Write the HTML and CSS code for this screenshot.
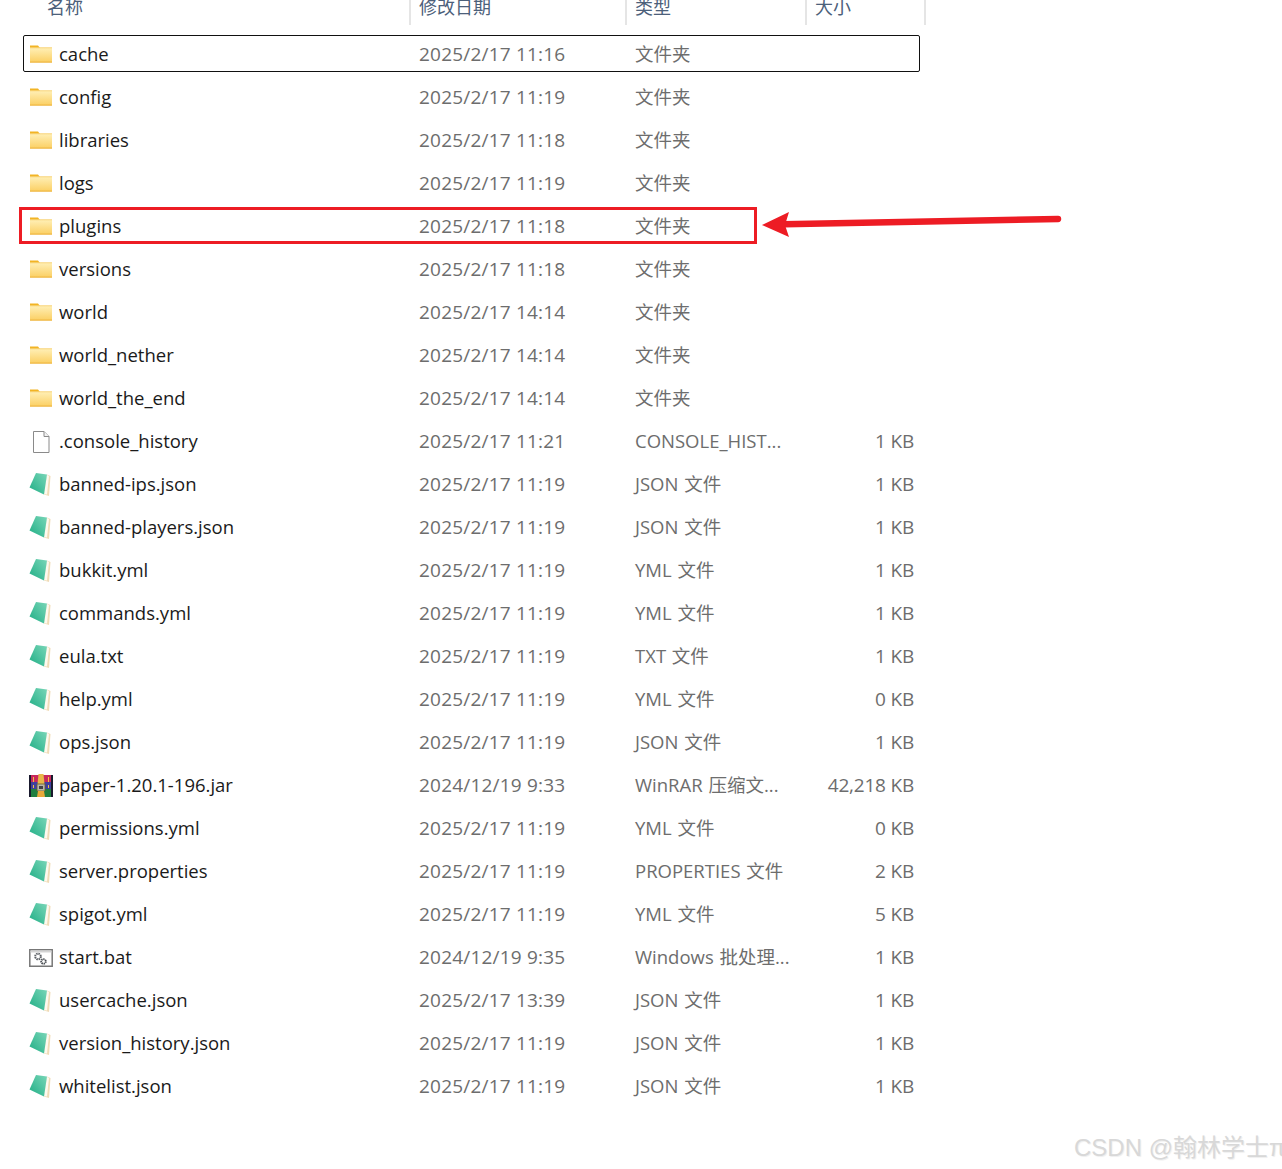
FILE: index.html
```html
<!DOCTYPE html>
<html lang="zh-CN">
<head>
<meta charset="utf-8">
<title>服务器文件夹</title>
<link rel="stylesheet" href="styles.css">
</head>
<body>
<svg class="defs" width="0" height="0" aria-hidden="true">
  <defs>
    <linearGradient id="fg" x1="0" y1="0" x2="0" y2="1"><stop offset="0" stop-color="#fff0b8"/><stop offset="1" stop-color="#fbcf62"/></linearGradient>
    <linearGradient id="ng" x1="0" y1="1" x2="1" y2="0"><stop offset="0" stop-color="#1fae85"/><stop offset="1" stop-color="#7ad6b8"/></linearGradient>
    <symbol id="folder" viewBox="0 0 24 20">
      <path d="M1 .5h8l2 2.500H1z" fill="#f2b424"/>
      <path d="M1 2.500h22v15H1z" fill="url(#fg)"/>
      <path d="M1 16.700h22v.8H1z" fill="#e8a92a"/>
      <path d="M1 2.500h22v.7H1z" fill="#f5c65a"/>
    </symbol>
    <symbol id="blank" viewBox="0 0 24 24">
      <path d="M4.500 1.500h10.500l5 5v16h-15.500z" fill="#fff" stroke="#8a8a8a"/>
      <path d="M15 1.500v5h5" fill="#f2f2f2" stroke="#8a8a8a"/>
    </symbol>
    <symbol id="note" viewBox="0 0 24 24">
      <path d="M18 1.500l3.500 1.500-1.500 20-5-1.500z" fill="#f0dcb8"/>
      <path d="M18 2l2 1-2 18.500-3-.5z" fill="#fdfaf0"/>
      <path d="M7 0l11 1.500-3 20L.5 14.500z" fill="url(#ng)"/>
    </symbol>
    <symbol id="rar" viewBox="0 0 24 24">
      <path d="M0 1h24v7H0z" fill="#c8285c"/>
      <path d="M0 8h24v7H0z" fill="#3f3f9f"/>
      <path d="M0 15h24v8H0z" fill="#1f7f3f"/>
      <path d="M0 1h2v22H0zM22 1h2v22h-2z" fill="#1a1a2e"/>
      <path d="M9.500 0h5l1 10h-7z" fill="#e8b84a"/>
      <path d="M8 10h8v7H8z" fill="#b9b6a8" stroke="#6b5a2a" stroke-width=".8"/>
      <path d="M10 12h4v3h-4z" fill="#444"/>
      <path d="M9 17h6l1 6H8z" fill="#e8a93a"/>
      <path d="M4 3h1v5H4zM4 11h1v3H4zM19 3h1v5h-1zM19 11h1v3h-1z" fill="#f1c040"/>
    </symbol>
    <symbol id="bat" viewBox="0 0 24 24">
      <path d="M.8 3.800h22.400v16.400H.8z" fill="#fff" stroke="#777" stroke-width="1.500"/>
      <path d="M1.500 4.500h21v2h-21z" fill="#d4d4d4"/>
      <circle cx="9" cy="10.500" r="2.800" fill="none" stroke="#5f6368" stroke-width="2" stroke-dasharray="1.500 .7"/>
      <circle cx="14.500" cy="15.500" r="2.300" fill="none" stroke="#45494e" stroke-width="1.800" stroke-dasharray="1.300 .6"/>
    </symbol>
  </defs>
</svg>
<div class="page">
  <div class="head">
    <div class="hcell hname"><span>名称</span></div>
    <div class="hcell"><span>修改日期</span></div>
    <div class="hcell"><span>类型</span></div>
    <div class="hcell"><span>大小</span></div>
  </div>
  <div class="list">
    <div class="row focused"><svg class="ico"><use href="#folder"/></svg><span class="name">cache</span><span class="date">2025/2/17 11:16</span><span class="type">文件夹</span><span class="size"></span></div>
    <div class="row"><svg class="ico"><use href="#folder"/></svg><span class="name">config</span><span class="date">2025/2/17 11:19</span><span class="type">文件夹</span><span class="size"></span></div>
    <div class="row"><svg class="ico"><use href="#folder"/></svg><span class="name">libraries</span><span class="date">2025/2/17 11:18</span><span class="type">文件夹</span><span class="size"></span></div>
    <div class="row"><svg class="ico"><use href="#folder"/></svg><span class="name">logs</span><span class="date">2025/2/17 11:19</span><span class="type">文件夹</span><span class="size"></span></div>
    <div class="row marked"><svg class="ico"><use href="#folder"/></svg><span class="name">plugins</span><span class="date">2025/2/17 11:18</span><span class="type">文件夹</span><span class="size"></span></div>
    <div class="row"><svg class="ico"><use href="#folder"/></svg><span class="name">versions</span><span class="date">2025/2/17 11:18</span><span class="type">文件夹</span><span class="size"></span></div>
    <div class="row"><svg class="ico"><use href="#folder"/></svg><span class="name">world</span><span class="date">2025/2/17 14:14</span><span class="type">文件夹</span><span class="size"></span></div>
    <div class="row"><svg class="ico"><use href="#folder"/></svg><span class="name">world_nether</span><span class="date">2025/2/17 14:14</span><span class="type">文件夹</span><span class="size"></span></div>
    <div class="row"><svg class="ico"><use href="#folder"/></svg><span class="name">world_the_end</span><span class="date">2025/2/17 14:14</span><span class="type">文件夹</span><span class="size"></span></div>
    <div class="row"><svg class="ico"><use href="#blank"/></svg><span class="name">.console_history</span><span class="date">2025/2/17 11:21</span><span class="type">CONSOLE_HIST...</span><span class="size">1 KB</span></div>
    <div class="row"><svg class="ico"><use href="#note"/></svg><span class="name">banned-ips.json</span><span class="date">2025/2/17 11:19</span><span class="type">JSON 文件</span><span class="size">1 KB</span></div>
    <div class="row"><svg class="ico"><use href="#note"/></svg><span class="name">banned-players.json</span><span class="date">2025/2/17 11:19</span><span class="type">JSON 文件</span><span class="size">1 KB</span></div>
    <div class="row"><svg class="ico"><use href="#note"/></svg><span class="name">bukkit.yml</span><span class="date">2025/2/17 11:19</span><span class="type">YML 文件</span><span class="size">1 KB</span></div>
    <div class="row"><svg class="ico"><use href="#note"/></svg><span class="name">commands.yml</span><span class="date">2025/2/17 11:19</span><span class="type">YML 文件</span><span class="size">1 KB</span></div>
    <div class="row"><svg class="ico"><use href="#note"/></svg><span class="name">eula.txt</span><span class="date">2025/2/17 11:19</span><span class="type">TXT 文件</span><span class="size">1 KB</span></div>
    <div class="row"><svg class="ico"><use href="#note"/></svg><span class="name">help.yml</span><span class="date">2025/2/17 11:19</span><span class="type">YML 文件</span><span class="size">0 KB</span></div>
    <div class="row"><svg class="ico"><use href="#note"/></svg><span class="name">ops.json</span><span class="date">2025/2/17 11:19</span><span class="type">JSON 文件</span><span class="size">1 KB</span></div>
    <div class="row"><svg class="ico"><use href="#rar"/></svg><span class="name">paper-1.20.1-196.jar</span><span class="date">2024/12/19 9:33</span><span class="type">WinRAR 压缩文...</span><span class="size">42,218 KB</span></div>
    <div class="row"><svg class="ico"><use href="#note"/></svg><span class="name">permissions.yml</span><span class="date">2025/2/17 11:19</span><span class="type">YML 文件</span><span class="size">0 KB</span></div>
    <div class="row"><svg class="ico"><use href="#note"/></svg><span class="name">server.properties</span><span class="date">2025/2/17 11:19</span><span class="type">PROPERTIES 文件</span><span class="size">2 KB</span></div>
    <div class="row"><svg class="ico"><use href="#note"/></svg><span class="name">spigot.yml</span><span class="date">2025/2/17 11:19</span><span class="type">YML 文件</span><span class="size">5 KB</span></div>
    <div class="row"><svg class="ico"><use href="#bat"/></svg><span class="name">start.bat</span><span class="date">2024/12/19 9:35</span><span class="type">Windows 批处理...</span><span class="size">1 KB</span></div>
    <div class="row"><svg class="ico"><use href="#note"/></svg><span class="name">usercache.json</span><span class="date">2025/2/17 13:39</span><span class="type">JSON 文件</span><span class="size">1 KB</span></div>
    <div class="row"><svg class="ico"><use href="#note"/></svg><span class="name">version_history.json</span><span class="date">2025/2/17 11:19</span><span class="type">JSON 文件</span><span class="size">1 KB</span></div>
    <div class="row"><svg class="ico"><use href="#note"/></svg><span class="name">whitelist.json</span><span class="date">2025/2/17 11:19</span><span class="type">JSON 文件</span><span class="size">1 KB</span></div>
  </div>
  <svg class="arrow" width="310" height="40" viewBox="0 0 310 40" aria-hidden="true">
    <path d="M24 17.300L298 12" stroke="#ed1c24" stroke-width="6.500" stroke-linecap="round" fill="none"/>
    <path d="M2 18L29 5l-4 13 4 12z" fill="#ed1c24"/>
  </svg>
  <div class="mark">CSDN @翰林学士π</div>
</div>
</body>
</html>
```
FILE: styles.css
```css
html, body {
  margin: 0;
  padding: 0;
  background: #fff;
}
.defs {
  position: absolute;
}
.page {
  position: relative;
  width: 1282px;
  height: 1169px;
  overflow: hidden;
  font-family: "Open Sans", "Noto Sans CJK SC", sans-serif;
  font-size: 19px;
}
.head {
  display: grid;
  grid-template-columns: 409px 216px 180px 121px;
  grid-template-rows: 25px;
  height: 25px;
  overflow: hidden;
  color: #4c607a;
  font-size: 18px;
}
.hcell {
  box-sizing: border-box;
  border-left: 2px solid #e5e5e5;
  padding-left: 8px;
  display: flex;
  align-items: flex-end;
  padding-bottom: 6px;
  line-height: 24px;
  min-height: 0;
}
.hcell:last-child {
  border-right: 2px solid #e5e5e5;
}
.hname {
  border-left: 0;
  padding-left: 47px;
}
.list {
  margin-top: 8px;
}
.row {
  position: relative;
  display: grid;
  grid-template-columns: 30px 360px 216px 180px 99px;
  grid-template-rows: 43px;
  height: 43px;
  margin-left: 29px;
  align-items: center;
  color: #6d6d6d;
  line-height: 43px;
}
.ico {
  width: 24px;
  height: 24px;
}
.name {
  color: #1a1a1a;
  white-space: nowrap;
  font-size: 18.500px;
  line-height: 41px;
  padding-bottom: 2px;
}
.date {
  letter-spacing: 0.2px;
}
.type {
  white-space: nowrap;
  font-size: 18.500px;
  line-height: 41px;
  padding-bottom: 2px;
  word-spacing: 1px;
}
.size {
  text-align: right;
  white-space: nowrap;
  letter-spacing: -0.2px;
}
.focused::after {
  content: "";
  position: absolute;
  left: -6px;
  top: 2px;
  width: 895px;
  height: 35px;
  border: 1.500px solid #111;
  border-radius: 2px;
}
.marked::after {
  content: "";
  position: absolute;
  left: -10px;
  top: 2px;
  width: 732px;
  height: 31px;
  border: 3px solid #ed1c24;
}
.arrow {
  position: absolute;
  left: 760px;
  top: 207px;
}
.mark {
  position: absolute;
  left: 1074px;
  top: 1131px;
  width: 208px;
  overflow: hidden;
  white-space: nowrap;
  font-family: "Liberation Sans", "Noto Sans CJK SC", sans-serif;
  font-size: 24px;
  line-height: 34px;
  color: #d8d8d8;
  text-shadow: 1px 1px 1px #eee;
}
```
